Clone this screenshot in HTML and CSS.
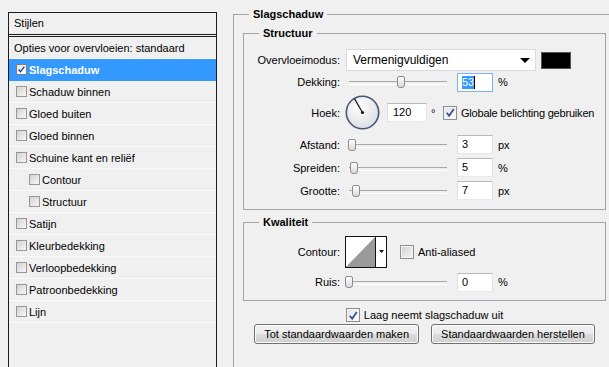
FILE: index.html
```html
<!doctype html>
<html>
<head>
  <meta charset="utf-8">
  <link rel="stylesheet" href="styles.css">
</head>
<body>
<div class="dialog">
  <div class="styles">
    <div class="styles-head">Stijlen</div>
    <div class="style-row plain">Opties voor overvloeien: standaard</div>
    <div class="style-row selected"><span class="cb-small on"><svg viewBox="0 0 11 11" width="9" height="9"><path d="M2 5.5 L4.3 8.2 L9 2" fill="none" stroke="#2c3f78" stroke-width="1.6"/></svg></span>Slagschaduw</div>
    <div class="style-row"><span class="cb-small"></span>Schaduw binnen</div>
    <div class="style-row"><span class="cb-small"></span>Gloed buiten</div>
    <div class="style-row"><span class="cb-small"></span>Gloed binnen</div>
    <div class="style-row"><span class="cb-small"></span>Schuine kant en reliëf</div>
    <div class="style-row sub"><span class="cb-small"></span>Contour</div>
    <div class="style-row sub"><span class="cb-small"></span>Structuur</div>
    <div class="style-row"><span class="cb-small"></span>Satijn</div>
    <div class="style-row"><span class="cb-small"></span>Kleurbedekking</div>
    <div class="style-row"><span class="cb-small"></span>Verloopbedekking</div>
    <div class="style-row"><span class="cb-small"></span>Patroonbedekking</div>
    <div class="style-row"><span class="cb-small"></span>Lijn</div>
  </div>

  <fieldset class="group effect">
    <legend>Slagschaduw</legend>

    <fieldset class="group">
      <legend>Structuur</legend>
      <div class="field tall">
        <span class="label">Overvloeimodus:</span>
        <div class="select">Vermenigvuldigen<span class="arrow"></span></div>
        <span class="swatch"></span>
      </div>
      <div class="field short">
        <span class="label">Dekking:</span>
        <div class="slider"><div class="track"><span class="thumb" style="left:53%"></span></div></div>
        <div class="num focus"><span class="sel">53</span><span class="caret"></span></div>
        <span class="unit">%</span>
      </div>
      <div class="field angle">
        <span class="label">Hoek:</span>
        <svg class="dial" width="35" height="35" viewBox="0 0 35 35">
          <defs>
            <radialGradient id="dialfill" cx="40%" cy="35%" r="70%">
              <stop offset="0" stop-color="#ffffff"/>
              <stop offset="1" stop-color="#dcdde2"/>
            </radialGradient>
          </defs>
          <circle cx="17.5" cy="17.5" r="16.2" fill="url(#dialfill)" stroke="#4b5677" stroke-width="1.6"/>
          <line x1="17.5" y1="17.5" x2="9.6" y2="3.9" stroke="#111" stroke-width="1.2"/>
          <circle cx="17.5" cy="17.5" r="1.6" fill="#111"/>
        </svg>
        <div class="num wide">120</div>
        <span class="deg">°</span>
        <span class="cb on"><svg viewBox="0 0 13 13" width="13" height="13"><path d="M3 6.8 L5.6 10 L10.6 2.6" fill="none" stroke="#3a5294" stroke-width="2"/></svg></span>
        <span class="cb-text">Globale belichting gebruiken</span>
      </div>
      <div class="field">
        <span class="label">Afstand:</span>
        <div class="slider"><div class="track"><span class="thumb" style="left:3%"></span></div></div>
        <div class="num">3</div>
        <span class="unit">px</span>
      </div>
      <div class="field">
        <span class="label">Spreiden:</span>
        <div class="slider"><div class="track"><span class="thumb" style="left:5%"></span></div></div>
        <div class="num">5</div>
        <span class="unit">%</span>
      </div>
      <div class="field">
        <span class="label">Grootte:</span>
        <div class="slider"><div class="track"><span class="thumb" style="left:7%"></span></div></div>
        <div class="num">7</div>
        <span class="unit">px</span>
      </div>
    </fieldset>

    <fieldset class="group quality">
      <legend>Kwaliteit</legend>
      <div class="field contour-row">
        <span class="label">Contour:</span>
        <svg class="contour" width="42" height="32" viewBox="0 0 42 32">
          <rect x="0.5" y="0.5" width="41" height="31" fill="#fff" stroke="#111"/>
          <polygon points="1,31 30,1 30,31" fill="#9a9a9a"/>
          <line x1="30.5" y1="0" x2="30.5" y2="32" stroke="#111"/>
          <polygon points="34,14 39,14 36.5,17" fill="#111"/>
        </svg>
        <span class="cb aa"></span>
        <span class="cb-text">Anti-aliased</span>
      </div>
      <div class="field noise">
        <span class="label">Ruis:</span>
        <div class="slider"><div class="track"><span class="thumb" style="left:0%"></span></div></div>
        <div class="num">0</div>
        <span class="unit">%</span>
      </div>
    </fieldset>

    <div class="knockout">
      <span class="cb on"><svg viewBox="0 0 13 13" width="13" height="13"><path d="M3 6.8 L5.6 10 L10.6 2.6" fill="none" stroke="#3a5294" stroke-width="2"/></svg></span>
      <span class="cb-text">Laag neemt slagschaduw uit</span>
    </div>
    <div class="buttons">
      <button>Tot standaardwaarden maken</button>
      <button>Standaardwaarden herstellen</button>
    </div>
  </fieldset>
</div>
</body>
</html>
```

FILE: styles.css
```css
* { box-sizing: border-box; }

html, body { margin: 0; height: 100%; overflow: hidden; }

body {
  background: #f0f0f0;
  font: 11px "Liberation Sans", Arial, sans-serif;
  color: #000;
}

.dialog { display: flex; align-items: flex-start; gap: 16px; padding-left: 8px; height: 100vh; }

/* styles list on the left, runs on past the window bottom */
.styles {
  margin-top: 12px;
  width: 209px;
  height: calc(100vh - 12px);
  border: 1px solid #1c1c1c;
  border-bottom: none;
  flex: none;
}
.styles-head { height: 24px; line-height: 21px; padding-left: 5px; border-bottom: 3px double #1c1c1c; }

.style-row {
  height: 22px;
  display: flex;
  align-items: center;
  padding-left: 7px;
  border-bottom: 1px solid #fbfbfb;
  white-space: nowrap;
}
.style-row.plain { padding-left: 5px; }
.style-row.sub { padding-left: 20px; }
.style-row.selected { background: #3399ff; border-bottom-color: #3399ff; color: #fff; font-weight: bold; }

.cb-small {
  width: 11px; height: 11px;
  margin-right: 2px;
  border: 1px solid #979797;
  background: linear-gradient(135deg, #d3d3d3, #f7f7f7);
  display: flex; align-items: center; justify-content: center;
}
.cb-small.on { background: linear-gradient(135deg, #e6e6e6, #ffffff); border-color: #7d7d7d; }

/* right side groups */
.group {
  margin: 0;
  padding: 7px 0 7px 9px;
  border: 1px solid #a3a3a3;
  min-width: 0;
}
.group legend {
  margin-left: 6px;
  padding: 0 4px;
  line-height: 16px;
  font-weight: bold;
}
.effect {
  margin-top: 6px;
  padding: 3px 9px 0;
  width: 383px;
  height: calc(100vh - 6px);
  border-bottom: none;
  flex: none;
}
.quality { margin-top: 4px; padding-top: 4px; padding-bottom: 6px; }

.field { display: flex; align-items: center; height: 23px; }
.field.tall { height: 24px; }
.field.short { height: 20px; }
.field.angle { height: 41px; }
.contour-row { height: 36px; }
.noise { height: 24px; }

.label { width: 87px; margin-right: 6px; text-align: right; white-space: nowrap; }

.select {
  width: 190px; height: 22px;
  background: #fff;
  border: 1px solid #d9dbe1;
  display: flex; align-items: center; justify-content: space-between;
  padding: 0 5px 0 6px;
  font-size: 12px;
}
.arrow { width: 0; height: 0; border-left: 5px solid transparent; border-right: 5px solid transparent; border-top: 5px solid #000; }
.swatch { width: 30px; height: 17px; margin-left: 5px; background: #000; border: 1px solid #555; }

.slider { width: 104px; height: 12px; padding: 0 3px; }
.track { position: relative; height: 12px; }
.track::before {
  content: "";
  position: absolute; left: 0; right: 0; top: 5px;
  height: 2px;
  border-top: 1px solid #a8a8a8;
  border-bottom: 1px solid #ffffff;
}
.thumb {
  position: absolute; top: 0;
  width: 8px; height: 12px;
  margin-left: -4px;
  border: 1px solid #8d8d8d;
  border-radius: 2px 2px 3px 3px;
  background: linear-gradient(#ffffff, #d9d9d9);
}

.num {
  width: 36px; height: 19px;
  margin-left: 7px;
  padding-left: 4px;
  line-height: 17px;
  background: #fff;
  border: 1px solid;
  border-color: #b5b8bf #e2e3ea #e3e9ef #dbdfe6;
  display: flex; align-items: center;
}
.num.focus { border-color: #7eb4ea; }
.num.wide { width: 40px; padding-left: 5px; }
.sel { background: #3399ff; color: #fff; line-height: 13px; }
.caret { width: 1px; height: 13px; background: #000; }
.unit { margin-left: 5px; }

.dial { margin-left: -1px; }
.deg { margin-left: 4px; width: 8px; }

.cb {
  width: 14px; height: 14px;
  border: 1px solid #8e8f8f;
  background: linear-gradient(135deg, #d0d0d0, #f7f7f7);
  box-shadow: inset 0 0 0 1px #f4f4f4;
  display: flex; align-items: center; justify-content: center;
  flex: none;
}
.cb.on { background: linear-gradient(135deg, #e2e2e2, #ffffff); }
.cb-text { margin-left: 4px; white-space: nowrap; }
.angle .cb { margin-left: 4px; }
.angle .cb-text { letter-spacing: -0.2px; }
.contour { margin-left: -1px; }
.aa { margin-left: 13px; }

.knockout { display: flex; align-items: center; justify-content: center; height: 18px; margin-top: 5px; }

.buttons { display: flex; justify-content: center; gap: 12px; }
.buttons button {
  height: 20px;
  padding: 0 9px;
  font: inherit;
  color: #000;
  border: 1px solid #707070;
  border-radius: 3px;
  background: linear-gradient(#f2f2f2 0, #ebebeb 50%, #dddddd 50%, #cfcfcf 100%);
  box-shadow: inset 0 0 0 1px #fcfcfc;
}
```
